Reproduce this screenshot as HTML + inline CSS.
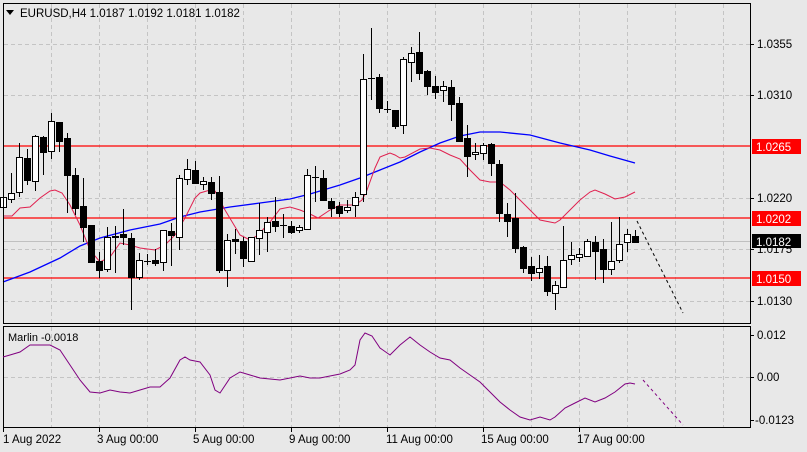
<!DOCTYPE html>
<html><head><meta charset="utf-8"><style>
html,body{margin:0;padding:0;background:#e8e8e8;}
svg{display:block;font-family:"Liberation Sans",sans-serif;}
</style></head><body>
<svg id="s" width="807" height="452" viewBox="0 0 807 452" xmlns="http://www.w3.org/2000/svg">
<rect width="807" height="452" fill="#e8e8e8"/>
<g id="grid" stroke="#c4c4c4" stroke-dasharray="4,3" stroke-width="1"></g>
<!-- horizontal levels -->
<line x1="3" y1="241.5" x2="750" y2="241.5" stroke="#c0c0c0"/>
<g stroke="#ff0000" stroke-width="1.3">
<line x1="3" y1="146" x2="750" y2="146"/>
<line x1="3" y1="218" x2="750" y2="218"/>
<line x1="3" y1="278" x2="750" y2="278"/>
</g>
<polyline fill="none" stroke="#0000ff" stroke-width="1.3" points="3,282 30,272 60,258 80,246 100,238 130,230 160,224 180,217 200,212 230,207 260,203 290,199 310,194 340,185 360,178 380,170 400,162 420,152 440,143 460,136 480,132 500,132 530,135 560,143 590,150 610,156 635,163"/>
<polyline fill="none" stroke="#e0204f" stroke-width="1" points="3,216 12,216 20,208 30,207 40,198 50,191 55,190 62,193 70,205 80,225 90,250 100,262 110,257 120,243 130,245 140,248 155,250 165,245 175,235 185,218 195,198 200,193 210,190 215,191 225,210 240,235 250,240 258,235 270,222 280,209 290,207 300,210 310,214 318,218 330,210 340,205 355,205 362,200 367,190 375,168 380,157 390,153 395,155 400,158 405,157 420,149 430,148 440,150 450,155 460,159 470,170 480,180 490,182 500,182 510,190 520,200 530,210 540,220 550,222 555,223 560,220 570,210 580,200 590,192 595,190 605,194 615,199 625,197 635,192"/>
<g id="candles"></g>
<line x1="637" y1="221" x2="683" y2="313" stroke="#000" stroke-dasharray="3,3"/>
<!-- frames -->
<rect x="3.5" y="3.5" width="747" height="320" fill="none" stroke="#000"/>
<rect x="3.5" y="326.5" width="747" height="101" fill="none" stroke="#000"/>
<!-- indicator -->
<polyline fill="none" stroke="#800080" stroke-width="1" points="3,357 10,355 20,352 30,345 40,345 50,345 60,350 70,365 80,380 90,392 100,393 110,390 120,392 130,393 140,390 150,387 160,387 170,378 180,360 185,357 190,360 200,362 210,375 215,390 220,393 230,378 240,372 250,375 260,378 270,379 280,380 290,378 300,376 310,378 320,378 330,376 340,374 350,370 355,365 360,340 365,333 372,336 380,348 390,355 400,345 410,337 420,345 430,352 440,358 450,360 460,368 470,375 480,382 490,392 500,402 510,410 520,417 530,420 540,417 550,420 555,417 565,408 575,403 585,398 595,402 605,398 615,392 625,384 630,383 635,384"/>
<line x1="643" y1="380" x2="683" y2="425" stroke="#800080" stroke-dasharray="3,3"/>
<text x="8" y="341" font-size="11" fill="#000">Marlin -0.0018</text>
<!-- header -->
<polygon points="6,10 14,10 10,15" fill="#000"/>
<text x="20" y="17" font-size="11.5" fill="#000">EURUSD,H4  1.0187 1.0192 1.0181 1.0182</text>
<!-- price axis -->
<g font-size="11.5" fill="#000">
<text x="757" y="48">1.0355</text>
<text x="757" y="99">1.0310</text>
<text x="757" y="202">1.0220</text>
<text x="757" y="253">1.0175</text>
<text x="757" y="305">1.0130</text>
<text x="757" y="339">0.012</text>
<text x="757" y="381">0.00</text>
<text x="755" y="424">-0.0123</text>
</g>
<g stroke="#000">
<line x1="750" y1="44.5" x2="754" y2="44.5"/><line x1="750" y1="95.5" x2="754" y2="95.5"/>
<line x1="750" y1="198.5" x2="754" y2="198.5"/><line x1="750" y1="249.5" x2="754" y2="249.5"/>
<line x1="750" y1="301.5" x2="754" y2="301.5"/><line x1="750" y1="335.5" x2="754" y2="335.5"/>
<line x1="750" y1="377.5" x2="754" y2="377.5"/><line x1="750" y1="420.5" x2="754" y2="420.5"/>
</g>
<rect x="752" y="139" width="49" height="15" fill="#ff0000"/><text x="756" y="151" font-size="11.5" fill="#fff">1.0265</text>
<rect x="752" y="211" width="49" height="15" fill="#ff0000"/><text x="756" y="223" font-size="11.5" fill="#fff">1.0202</text>
<rect x="752" y="234" width="49" height="14" fill="#000"/><text x="756" y="246" font-size="11.5" fill="#fff">1.0182</text>
<rect x="752" y="271" width="49" height="15" fill="#ff0000"/><text x="756" y="283" font-size="11.5" fill="#fff">1.0150</text>
<!-- time axis -->
<g font-size="11.5" fill="#000">
<text x="3" y="443">1 Aug 2022</text>
<text x="97" y="443">3 Aug 00:00</text>
<text x="193" y="443">5 Aug 00:00</text>
<text x="289" y="443">9 Aug 00:00</text>
<text x="386" y="443">11 Aug 00:00</text>
<text x="481" y="443">15 Aug 00:00</text>
<text x="577" y="443">17 Aug 00:00</text>
</g>
<g stroke="#000">
<line x1="3.5" y1="428" x2="3.5" y2="432"/><line x1="99.5" y1="428" x2="99.5" y2="432"/>
<line x1="195.5" y1="428" x2="195.5" y2="432"/><line x1="291.5" y1="428" x2="291.5" y2="432"/>
<line x1="387.5" y1="428" x2="387.5" y2="432"/><line x1="483.5" y1="428" x2="483.5" y2="432"/>
<line x1="579.5" y1="428" x2="579.5" y2="432"/>
</g>
</svg>
<script>
var NS="http://www.w3.org/2000/svg";
function el(p,t,a){var e=document.createElementNS(NS,t);for(var k in a)e.setAttribute(k,a[k]);p.appendChild(e);return e;}
var g=document.getElementById("grid");
for(var x=51;x<750;x+=48){el(g,"line",{x1:x+.5,y1:4,x2:x+.5,y2:323});el(g,"line",{x1:x+.5,y1:327,x2:x+.5,y2:427});}
[44,95,198,249,301].forEach(function(y){el(g,"line",{x1:4,y1:y+.5,x2:750,y2:y+.5});});
el(g,"line",{x1:4,y1:377.5,x2:750,y2:377.5});
var D=[[207,197,190,212],[199,193,173,203],[192,157,143,197],[158,180,149,185],[181,136,135,191],[137,152,136,175],[151,121,113,159],[122,141,122,152],[138,175,133,213],[175,208,168,215],[206,227,178,242],[225,262,225,262],[261,270,252,278],[269,237,227,272],[236,237,226,273],[234,237,209,245],[238,277,233,310],[277,260,253,280],[261,261,254,265],[260,263,249,266],[262,230,230,271],[231,235,223,266],[237,178,175,250],[179,169,159,185],[170,183,161,184],[184,181,177,190],[182,193,177,200],[192,270,176,273],[270,240,234,287],[239,241,229,254],[241,258,237,267],[261,237,237,262],[238,230,203,255],[232,222,217,252],[221,226,197,232],[225,225,214,238],[226,232,221,234],[230,227,225,233],[229,175,169,229],[177,177,166,202],[178,200,170,200],[201,208,198,217],[206,213,202,217],[210,207,200,213],[205,197,192,217],[194,79,54,202],[78,78,28,100],[77,108,74,113],[109,109,101,113],[110,126,110,129],[125,59,57,134],[62,53,47,82],[52,73,32,80],[71,86,70,95],[86,92,76,99],[90,86,81,102],[87,104,80,121],[103,141,97,142],[138,156,125,177],[154,152,143,160],[153,145,143,160],[144,163,143,176],[164,213,160,222],[214,221,203,237],[218,248,193,253],[247,268,246,273],[266,273,257,281],[272,268,255,279],[266,291,256,296],[293,285,281,310],[287,260,226,287],[259,255,242,265],[257,254,248,262],[256,241,239,257],[242,251,236,280],[249,269,239,283],[269,261,222,275],[260,244,217,263],[242,234,229,252],[236,242,230,243]];
var c=document.getElementById("candles");
D.forEach(function(d,i){var x=3+8*i,o=d[0],cl=d[1],h=d[2],l=d[3];
el(c,"line",{x1:x+.5,y1:h,x2:x+.5,y2:l,stroke:"#000"});
var t=Math.min(o,cl),b=Math.max(o,cl);
if(b-t<1){el(c,"line",{x1:x-3,y1:t+.5,x2:x+4,y2:t+.5,stroke:"#000"});}
else el(c,"rect",{x:x-2.5,y:t+.5,width:6,height:b-t,fill:(cl<o?"#fff":"#000"),stroke:"#000"});
});
</script>
</body></html>
